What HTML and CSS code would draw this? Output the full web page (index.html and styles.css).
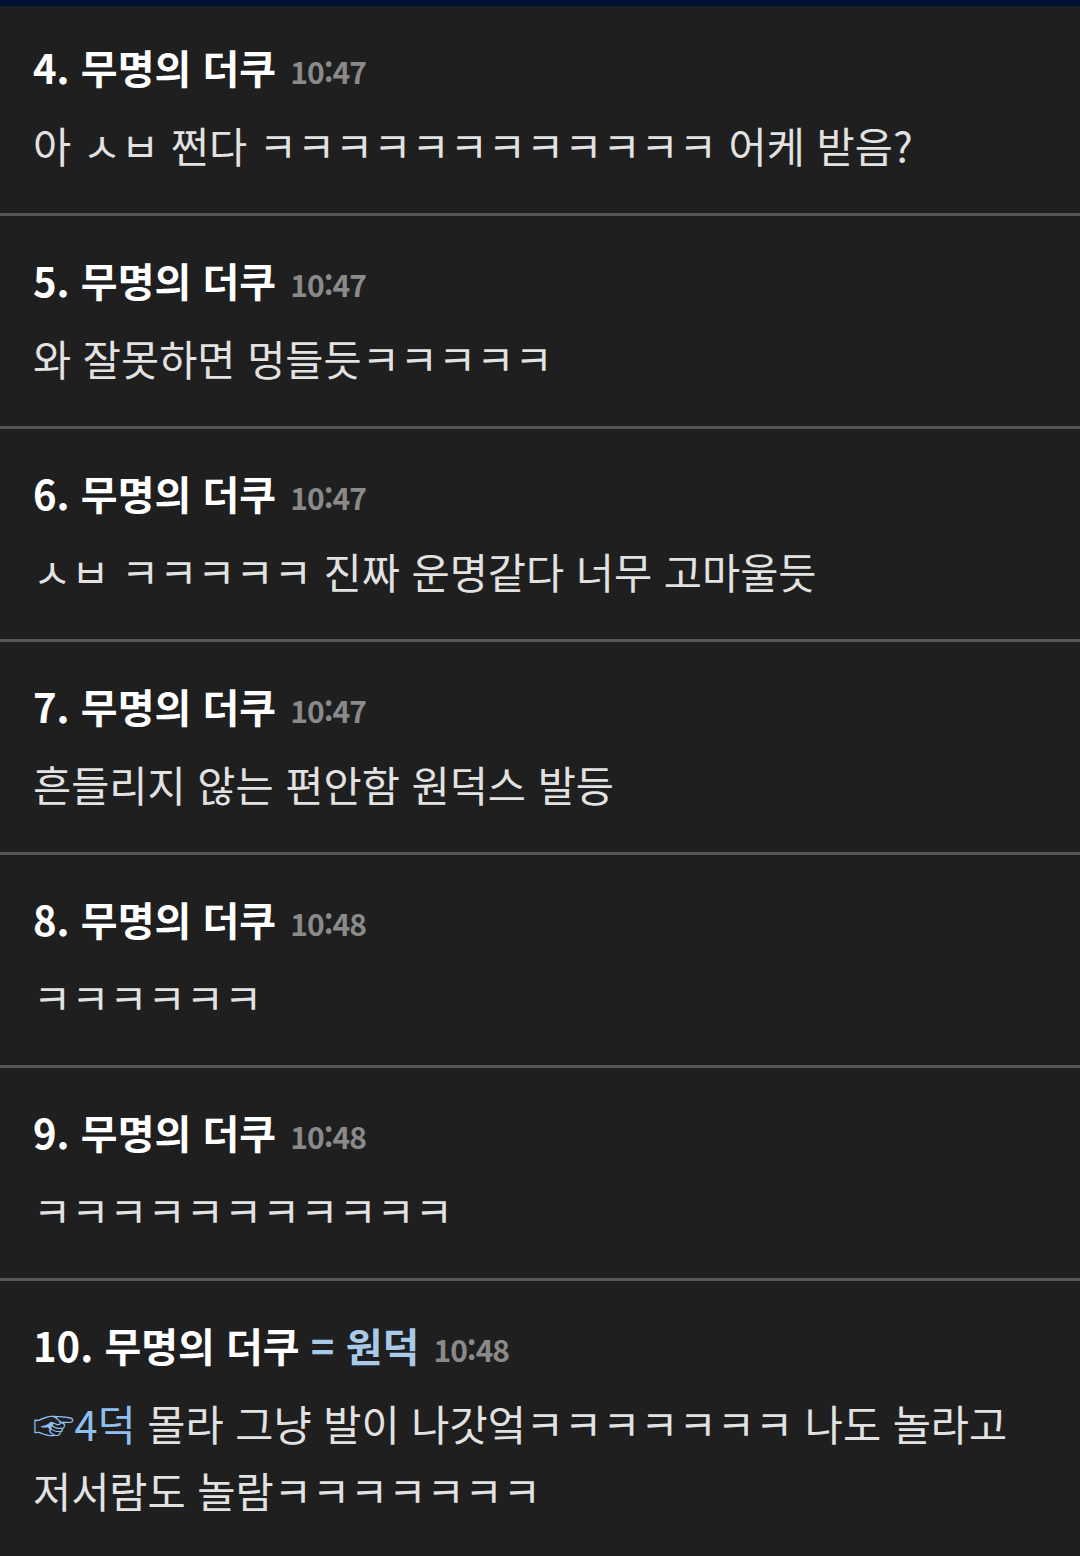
FILE: index.html
```html
<!DOCTYPE html>
<html lang="ko">
<head>
    <meta charset="UTF-8">
    <meta name="viewport" content="width=device-width, initial-scale=1.0">
    <title>댓글</title>
    <link rel="stylesheet" href="styles.css">
</head>
<body>
    <div class="topbar"></div>
    <div class="comments">
        <div class="comment first">
            <div class="head">4. 무명의 더쿠 <span class="time">10:47</span></div>
            <div class="text">아 ㅅㅂ 쩐다 ㅋㅋㅋㅋㅋㅋㅋㅋㅋㅋㅋㅋ 어케 받음?</div>
        </div>
        <div class="comment">
            <div class="head">5. 무명의 더쿠 <span class="time">10:47</span></div>
            <div class="text">와 잘못하면 멍들듯ㅋㅋㅋㅋㅋ</div>
        </div>
        <div class="comment">
            <div class="head">6. 무명의 더쿠 <span class="time">10:47</span></div>
            <div class="text">ㅅㅂ ㅋㅋㅋㅋㅋ 진짜 운명같다 너무 고마울듯</div>
        </div>
        <div class="comment">
            <div class="head">7. 무명의 더쿠 <span class="time">10:47</span></div>
            <div class="text">흔들리지 않는 편안함 원덕스 발등</div>
        </div>
        <div class="comment">
            <div class="head">8. 무명의 더쿠 <span class="time">10:48</span></div>
            <div class="text">ㅋㅋㅋㅋㅋㅋ</div>
        </div>
        <div class="comment">
            <div class="head">9. 무명의 더쿠 <span class="time">10:48</span></div>
            <div class="text">ㅋㅋㅋㅋㅋㅋㅋㅋㅋㅋㅋ</div>
        </div>
        <div class="comment last">
            <div class="head">10. 무명의 더쿠 <span class="op">= 원덕</span> <span class="time">10:48</span></div>
            <div class="text"><span class="reply">☞4덕</span> 몰라 그냥 발이 나갓엌ㅋㅋㅋㅋㅋㅋㅋ 나도 놀라고 저서람도 놀람ㅋㅋㅋㅋㅋㅋㅋ</div>
        </div>
    </div>
</body>
</html>
```

FILE: styles.css
```css
body {
    margin: 0;
    background: #1f1f1f;
    font-family: 'Noto Sans CJK KR', 'Noto Sans', sans-serif;
    color: #e2e2e2;
}

.topbar {
    height: 6px;
    background: #011133;
}

.comment {
    padding: 34px 33px 34px;
    border-bottom: 3px solid #555555;
}

.comment.first {
    padding-top: 31px;
}

.comment.last {
    border-bottom: none;
}

.head {
    font-size: 40px;
    font-weight: bold;
    line-height: 60px;
    color: #ffffff;
    white-space: nowrap;
}

.head .time {
    margin-left: 3px;
    font-size: 30px;
    font-weight: bold;
    line-height: 1;
    letter-spacing: -1px;
    color: #8a8a8a;
}

.head .op {
    color: #a9c9e9;
}

.text {
    margin-top: 15px;
    font-size: 41.5px;
    line-height: 67px;
    word-break: keep-all;
}

.text .reply {
    line-height: 1;
    color: #8ec1f0;
}
```
